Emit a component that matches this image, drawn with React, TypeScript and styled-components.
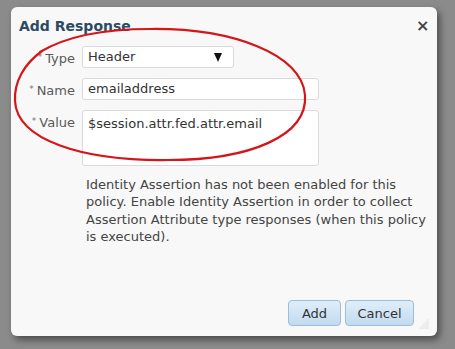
import React, { useState } from 'react';
import styled, { createGlobalStyle } from 'styled-components';

const GlobalStyle = createGlobalStyle`
  html, body {
    margin: 0;
    padding: 0;
    background: #8b8b8b;
  }
  body {
    font-family: "DejaVu Sans", Tahoma, sans-serif;
  }
`;

const Page = styled.div`
  width: 455px;
  height: 349px;
  padding: 7px 0 0 11px;
  box-sizing: border-box;
  background: #8b8b8b;
`;

const Dialog = styled.div`
  position: relative;
  width: 426px;
  height: 329px;
  display: flex;
  flex-direction: column;
  background: #f8f8f8;
  border-radius: 6px;
  box-shadow: 3px 4px 7px rgba(0, 0, 0, 0.45);
  box-sizing: border-box;
`;

const TitleBar = styled.div`
  display: flex;
  justify-content: space-between;
  align-items: center;
  height: 26px;
  padding: 6px 9px 0 8px;
`;

const Title = styled.h1`
  margin: 0;
  font-size: 14px;
  line-height: 20px;
  font-weight: bold;
  color: #2c4a64;
`;

const CloseButton = styled.button`
  border: none;
  background: none;
  padding: 0;
  width: 12px;
  height: 14px;
  font-size: 16px;
  font-weight: bold;
  line-height: 14px;
  color: #444;
  cursor: pointer;
  font-family: "DejaVu Sans", sans-serif;
`;

const Form = styled.div`
  display: grid;
  grid-template-columns: 64px auto;
  column-gap: 7px;
  row-gap: 8px;
  margin-top: 7px;
  justify-items: start;
`;

const Label = styled.label`
  justify-self: end;
  font-size: 13px;
  line-height: 22px;
  color: #5a5a5a;
  white-space: nowrap;
`;

const Star = styled.span`
  font-size: 9px;
  vertical-align: 3px;
  color: #777;
  margin-right: 3px;
`;

const Field = styled.div<{ $w: number; $h: number }>`
  position: relative;
  width: ${p => p.$w}px;
  height: ${p => p.$h}px;
  box-sizing: border-box;
  border: 1px solid #dadada;
  border-radius: 3px;
  background: #fff;
  padding: ${p => (p.$h > 30 ? '4px 5px' : '0 5px')};
  font-size: 13px;
  line-height: ${p => (p.$h > 30 ? '18px' : '20px')};
  color: #333;
  display: flex;
  align-items: ${p => (p.$h > 30 ? 'flex-start' : 'center')};
  justify-content: space-between;
`;

const Arrow = styled.span`
  width: 0;
  height: 0;
  border-left: 4.5px solid transparent;
  border-right: 4.5px solid transparent;
  border-top: 9px solid #111;
  margin-right: 6px;
`;

const Note = styled.p`
  margin: 10px 0 0 75px;
  font-size: 13px;
  line-height: 17.3px;
  color: #444;
`;

const Footer = styled.div`
  margin-top: auto;
  display: flex;
  justify-content: flex-end;
  gap: 4px;
  padding: 0 23px 10px 0;
`;

const Button = styled.button<{ $w: number }>`
  width: ${p => p.$w}px;
  height: 26px;
  border: 1px solid #9dbcd8;
  border-radius: 4px;
  background: linear-gradient(#e0eefa, #c2daef);
  font-family: "DejaVu Sans", sans-serif;
  font-size: 13px;
  color: #333;
  padding: 0;
  cursor: pointer;
`;

const Grip = styled.svg`
  position: absolute;
  right: 8px;
  bottom: 7px;
`;

const Circle = styled.svg`
  position: absolute;
  left: 0;
  top: 0;
  pointer-events: none;
  overflow: visible;
`;

const gripDots: [number, number][] = [];
for (let r = 0; r < 5; r++) {
  for (let c = 4 - r; c < 5; c++) gripDots.push([c * 2 + 1, r * 2 + 1]);
}

export default function App() {
  const [type] = useState('Header');
  const [name] = useState('emailaddress');
  const [value] = useState('$session.attr.fed.attr.email');

  return (
    <Page>
      <GlobalStyle />
      <Dialog>
        <TitleBar>
          <Title>Add Response</Title>
          <CloseButton aria-label="close">×</CloseButton>
        </TitleBar>
        <Form>
          <Label><Star>*</Star>Type</Label>
          <Field $w={152} $h={22}>
            {type}
            <Arrow />
          </Field>
          <Label><Star>*</Star>Name</Label>
          <Field $w={237} $h={22}>{name}</Field>
          <Label><Star>*</Star>Value</Label>
          <Field $w={237} $h={56}>{value}</Field>
        </Form>
        <Note>
          Identity Assertion has not been enabled for this
          <br />
          policy. Enable Identity Assertion in order to collect
          <br />
          Assertion Attribute type responses (when this policy
          <br />
          is executed).
        </Note>
        <Footer>
          <Button $w={53}>Add</Button>
          <Button $w={69}>Cancel</Button>
        </Footer>
        <Grip width="10" height="10" viewBox="0 0 10 10">
          {gripDots.map(([x, y], i) => (
            <rect key={i} x={x - 0.4} y={y - 0.4} width="0.8" height="0.8" fill="#b4b4b4" />
          ))}
        </Grip>
        <Circle width="426" height="329">
          <path
            transform="translate(-11,-7)"
            d="M 40 52 C 70 34, 110 29, 150 29 C 232 28, 302 54, 305 95 C 308 136, 250 160, 168 160 C 82 161, 17 140, 15 101 C 14 82, 24 64, 42 51"
            fill="none"
            stroke="#d4161a"
            strokeWidth="2.2"
            strokeLinecap="round"
          />
        </Circle>
      </Dialog>
    </Page>
  );
}
